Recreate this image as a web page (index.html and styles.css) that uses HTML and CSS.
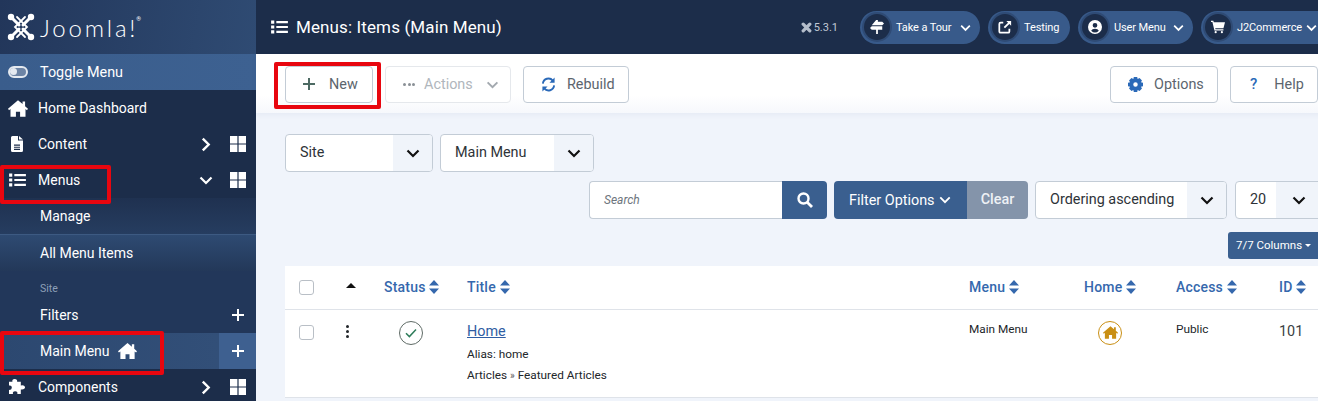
FILE: index.html
```html
<!DOCTYPE html>
<html lang="en">
<head>
    <meta charset="UTF-8">
    <title>Menus: Items (Main Menu)</title>
    <link rel="stylesheet" href="styles.css">
</head>
<body>
<svg class="sprites" width="0" height="0">
    <symbol id="i-home" viewBox="0 0 24 20"><path d="M12 0 L17.5 4.7 V1.5 H20.5 V7.3 L24 10.4 L22.8 12 L21 10.5 V20 H14.5 V14 H9.5 V20 H3 V10.5 L1.2 12 L0 10.4 Z"/></symbol>
    <symbol id="i-grid" viewBox="0 0 16 16"><path d="M0 0H7.4V7.4H0Z M8.6 0H16V7.4H8.6Z M0 8.6H7.4V16H0Z M8.6 8.6H16V16H8.6Z"/></symbol>
    <symbol id="i-list" viewBox="0 0 18 15"><path d="M0 .5H3.4V3.9H0Z M0 5.8H3.4V9.2H0Z M0 11.1H3.4V14.5H0Z M5.6 1H18V3.4H5.6Z M5.6 6.3H18V8.7H5.6Z M5.6 11.6H18V14H5.6Z"/></symbol>
    <symbol id="i-down" viewBox="0 0 14 9"><path d="M1.5 1.5 L7 7 L12.5 1.5" fill="none" stroke="currentColor" stroke-width="2.2"/></symbol>
    <symbol id="i-right" viewBox="0 0 9 14"><path d="M1.5 1.5 L7 7 L1.5 12.5" fill="none" stroke="currentColor" stroke-width="2.2"/></symbol>
    <symbol id="i-plus" viewBox="0 0 12 12"><path d="M6 0V12 M0 6H12" fill="none" stroke="currentColor" stroke-width="2"/></symbol>
    <symbol id="i-sort" viewBox="0 0 10 14"><path d="M5 0 L10 5.6 H0 Z M0 8.4 H10 L5 14 Z"/></symbol>
</svg>

<div class="layout">
    <aside class="sidebar">
        <div class="logo">
            <svg class="logo-mark" viewBox="0 0 28 28">
                <g fill="none" stroke="#fff" stroke-linecap="round">
                    <path d="M5 5 L12 12 M16 16 L23 23 M23 5 L16 12 M12 16 L5 23" stroke-width="3"/>
                    <path d="M10 4 L20 14 L10 24 M18 4 L8 14 L18 24" stroke-width="1.8"/>
                </g>
                <g fill="#fff"><circle cx="4" cy="4" r="3.2"/><circle cx="24" cy="4" r="3.2"/><circle cx="4" cy="24" r="3.2"/><circle cx="24" cy="24" r="3.2"/></g>
            </svg>
            <span class="logo-text">Joomla!</span><sup class="logo-reg">®</sup>
        </div>
        <div class="side-toggle">
            <span class="toggle-icon"><span class="toggle-knob"></span></span>
            <span>Toggle Menu</span>
        </div>
        <div class="side-item">
            <svg class="side-icon"><use href="#i-home"/></svg>
            <span class="side-label">Home Dashboard</span>
        </div>
        <div class="side-item">
            <svg class="side-icon side-icon-doc" viewBox="0 0 12 16"><path d="M0 1.5Q0 0 1.5 0H7V4.5H12V14.5Q12 16 10.5 16H1.5Q0 16 0 14.5Z M8 0L12 3.6H8Z M3 8.6V9.7H9V8.6Z M3 10.7V11.8H9V10.7Z M3 12.8V13.9H9V12.8Z" fill-rule="evenodd"/></svg>
            <span class="side-label">Content</span>
            <svg class="side-chev"><use href="#i-right"/></svg>
            <svg class="side-grid"><use href="#i-grid"/></svg>
        </div>
        <div class="side-item">
            <svg class="side-icon side-icon-list"><use href="#i-list"/></svg>
            <span class="side-label">Menus</span>
            <svg class="side-chev side-chev-down"><use href="#i-down"/></svg>
            <svg class="side-grid"><use href="#i-grid"/></svg>
        </div>
        <div class="submenu">
            <div class="sub-item sub-manage">Manage</div>
            <div class="sub-item sub-all">All Menu Items</div>
            <div class="sub-caption">Site</div>
            <div class="sub-item sub-filters">
                <span class="side-label">Filters</span>
                <svg class="sub-plus"><use href="#i-plus"/></svg>
            </div>
            <div class="sub-item sub-active">
                <span>Main Menu</span>
                <svg class="sub-home"><use href="#i-home"/></svg>
                <span class="sub-add"><svg class="sub-plus"><use href="#i-plus"/></svg></span>
            </div>
        </div>
        <div class="side-item">
            <svg class="side-icon side-icon-puzzle" viewBox="0 0 18 18"><path d="M6 0 Q9 0 8.6 3 H12.5 V7 Q16 6 17 8.5 Q17 11.5 12.5 11 V16 H8.8 Q9.5 13 6.5 13 Q3.5 13 4.2 16 H0 V11.5 Q3 12 3 9 Q3 6.5 0 7 V3 H3.6 Q3 0 6 0Z"/></svg>
            <span class="side-label">Components</span>
            <svg class="side-chev"><use href="#i-right"/></svg>
            <svg class="side-grid"><use href="#i-grid"/></svg>
        </div>
    </aside>

    <main class="main">
        <header class="topbar">
            <svg class="title-icon"><use href="#i-list"/></svg>
            <h1 class="page-title">Menus: Items (Main Menu)</h1>
            <div class="top-right">
                <span class="version">
                    <svg class="version-mark" viewBox="0 0 10 10"><path d="M2 2L8 8M8 2L2 8" stroke="#b4bdca" stroke-width="3" stroke-linecap="round"/></svg>
                    5.3.1
                </span>
                <span class="pill pill-tour">
                    <span class="pill-icon"><svg viewBox="0 0 16 16"><path d="M7 0H9V2H14L16 4 14 6H2ZM0 9L2 7H14V11H9V16H7V11H2Z" fill="#fff"/></svg></span>
                    <span class="pill-text">Take a Tour</span>
                    <svg class="pill-chev"><use href="#i-down"/></svg>
                </span>
                <span class="pill pill-testing">
                    <span class="pill-icon"><svg viewBox="0 0 16 16"><path d="M6 3H3Q1.5 3 1.5 4.5V13Q1.5 14.5 3 14.5H11.5Q13 14.5 13 13V10" fill="none" stroke="#fff" stroke-width="2"/><path d="M9.5 1H15V6.5L13 4.5 8 9.5 6.5 8 11.5 3Z" fill="#fff"/></svg></span>
                    <span class="pill-text">Testing</span>
                </span>
                <span class="pill pill-user">
                    <span class="pill-icon"><svg viewBox="0 0 16 16"><path fill-rule="evenodd" d="M8 0A8 8 0 1 1 8 16 8 8 0 1 1 8 0Z M8 3.4A2.7 2.7 0 1 0 8 8.8 2.7 2.7 0 1 0 8 3.4Z M3.6 12.2Q8 16.6 12.4 12.2 11.4 10 8 10 4.6 10 3.6 12.2Z" fill="#fff"/></svg></span>
                    <span class="pill-text">User Menu</span>
                    <svg class="pill-chev"><use href="#i-down"/></svg>
                </span>
                <span class="pill pill-shop">
                    <span class="pill-icon"><svg viewBox="0 0 18 16"><path d="M0 0H3L3.6 2H18L16 9.5H5.4L5.8 11H16V12.6H4.4L1.8 1.6H0Z" fill="#fff"/><circle cx="6" cy="14.6" r="1.4" fill="#fff"/><circle cx="14" cy="14.6" r="1.4" fill="#fff"/></svg></span>
                    <span class="pill-text">J2Commerce</span>
                    <svg class="pill-chev"><use href="#i-down"/></svg>
                </span>
            </div>
        </header>

        <div class="toolbar">
            <button class="btn btn-new"><svg class="btn-icon btn-icon-new"><use href="#i-plus"/></svg>New</button>
            <button class="btn btn-actions"><span class="dots"><i></i><i></i><i></i></span>Actions<svg class="btn-chev"><use href="#i-down"/></svg></button>
            <button class="btn btn-rebuild">
                <svg class="btn-icon btn-icon-sync" viewBox="0 0 16 16"><path d="M2 7A6 6 0 0 1 12.6 3.8 M14 9A6 6 0 0 1 3.4 12.2" fill="none" stroke="#2a69b8" stroke-width="2"/><path d="M14.5 0.5V6H9ZM1.5 15.5V10H7Z" fill="#2a69b8"/></svg>
                Rebuild
            </button>
            <span class="toolbar-gap"></span>
            <button class="btn btn-options">
                <svg class="btn-icon btn-icon-gear" viewBox="0 0 16 16"><path fill-rule="evenodd" fill="#2a69b8" d="M6.2 0H9.8L10.3 2.2 12.3 1.1 14.9 3.7 13.8 5.7 16 6.2V9.8L13.8 10.3 14.9 12.3 12.3 14.9 10.3 13.8 9.8 16H6.2L5.7 13.8 3.7 14.9 1.1 12.3 2.2 10.3 0 9.8V6.2L2.2 5.7 1.1 3.7 3.7 1.1 5.7 2.2Z M8 5.6A2.4 2.4 0 1 0 8 10.4 2.4 2.4 0 1 0 8 5.6Z"/></svg>
                Options
            </button>
            <button class="btn btn-help"><span class="help-mark">?</span>Help</button>
        </div>

        <div class="content">
            <div class="menu-selects">
                <div class="select select-site"><span class="select-value">Site</span><span class="select-arrow"><svg><use href="#i-down"/></svg></span></div>
                <div class="select select-menu"><span class="select-value">Main Menu</span><span class="select-arrow"><svg><use href="#i-down"/></svg></span></div>
            </div>
            <div class="filter-row">
                <div class="search">
                    <span class="search-input">Search</span>
                    <span class="search-btn"><svg viewBox="0 0 16 16"><circle cx="6.5" cy="6.5" r="5" fill="none" stroke="#fff" stroke-width="2.4"/><path d="M10.2 10.2L15 15" stroke="#fff" stroke-width="2.8"/></svg></span>
                </div>
                <div class="filter-group">
                    <span class="filter-btn">Filter Options<svg><use href="#i-down"/></svg></span>
                    <span class="clear-btn">Clear</span>
                </div>
                <div class="select select-order"><span class="select-value">Ordering ascending</span><span class="select-arrow"><svg><use href="#i-down"/></svg></span></div>
                <div class="select select-limit"><span class="select-value">20</span><span class="select-arrow"><svg><use href="#i-down"/></svg></span></div>
            </div>
            <div class="columns-row">
                <span class="columns-btn">7/7 Columns<span class="caret"></span></span>
            </div>

            <table class="items">
                <colgroup>
                    <col class="col-check"><col class="col-order"><col class="col-status"><col class="col-title">
                    <col class="col-menu"><col class="col-home"><col class="col-access"><col class="col-id">
                </colgroup>
                <thead>
                    <tr>
                        <th><span class="checkbox"></span></th>
                        <th><span class="order-up"></span></th>
                        <th>Status <svg class="sort"><use href="#i-sort"/></svg></th>
                        <th>Title <svg class="sort"><use href="#i-sort"/></svg></th>
                        <th>Menu <svg class="sort"><use href="#i-sort"/></svg></th>
                        <th>Home <svg class="sort"><use href="#i-sort"/></svg></th>
                        <th>Access <svg class="sort"><use href="#i-sort"/></svg></th>
                        <th>ID <svg class="sort"><use href="#i-sort"/></svg></th>
                    </tr>
                </thead>
                <tbody>
                    <tr>
                        <td><span class="checkbox"></span></td>
                        <td><span class="kebab"><i></i><i></i><i></i></span></td>
                        <td class="cell-status"><span class="status-ok"><svg viewBox="0 0 12 10"><path d="M1 5.2L4.4 8.6 11 1.6" fill="none" stroke="#2f7d5b" stroke-width="1.5"/></svg></span></td>
                        <td>
                            <a class="item-link" href="#">Home</a>
                            <div class="item-note">Alias: home</div>
                            <div class="item-note">Articles <span class="crumb">»</span> Featured Articles</div>
                        </td>
                        <td class="cell-small">Main Menu</td>
                        <td class="cell-home"><span class="home-badge"><svg><use href="#i-home"/></svg></span></td>
                        <td class="cell-small">Public</td>
                        <td class="cell-id">101</td>
                    </tr>
                </tbody>
            </table>
        </div>
    </main>
</div>

<!-- red annotation boxes -->
<div class="mark mark-new"></div>
<div class="mark mark-menus"></div>
<div class="mark mark-main"></div>
</body>
</html>
```

FILE: styles.css
```css
/* Page */
html, body {
    margin: 0;
    height: 401px;
    overflow: hidden;
}

body {
    position: relative;
    width: 1318px;
    background-color: #f0f4fb;
    font-family: Roboto, "Liberation Sans", sans-serif;
    font-size: 14px;
    color: #22262a;
}

.sprites {
    display: block;
    height: 0;
}

svg {
    fill: currentColor;
}

.layout {
    display: flex;
    width: 1345px;
}

/* Sidebar */
.sidebar {
    flex: 0 0 256px;
    height: 405px;
    background-color: #1c2d4a;
    color: #fff;
    font-size: 14px;
}

.logo {
    display: flex;
    align-items: center;
    height: 54px;
    padding-left: 7px;
    box-sizing: border-box;
    background: linear-gradient(100deg, #22365a 0%, #2f4b73 100%);
}

.logo-mark {
    width: 28px;
    height: 28px;
    margin-right: 5px;
}

.logo-text {
    font-family: Lato, sans-serif;
    font-weight: 300;
    font-size: 24px;
    letter-spacing: 2.8px;
}

.logo-reg {
    font-size: 6px;
    align-self: flex-start;
    margin: 15px 0 0 -2px;
}

.side-toggle {
    display: flex;
    align-items: center;
    height: 36px;
    padding-left: 8px;
    font-size: 14.4px;
    background: linear-gradient(90deg, #3a5d8c, #3d6191);
}

.toggle-icon {
    display: block;
    box-sizing: border-box;
    width: 20px;
    height: 12px;
    margin-right: 12px;
    border: 2.5px solid #e4e9f0;
    border-radius: 6px;
    background-color: #6d84a5;
}

.toggle-knob {
    display: block;
    width: 7px;
    height: 7px;
    border-radius: 50%;
    background-color: #e4e9f0;
}

.side-item {
    display: flex;
    align-items: center;
    height: 36px;
    padding-left: 8px;
}

.side-icon {
    flex: none;
    width: 20px;
    height: 17px;
    margin-right: 10px;
}

.side-icon-doc {
    width: 12px;
    height: 16px;
    margin: 0 15px 0 3px;
}

.side-icon-list {
    width: 17px;
    height: 14px;
    margin: 0 12px 0 1px;
}

.side-icon-puzzle {
    width: 17px;
    height: 17px;
    margin: 0 12px 0 1px;
}

.side-label {
    flex: 1;
}

.side-chev {
    flex: none;
    width: 10px;
    height: 15px;
    margin-right: 19px;
}

.side-chev-down {
    width: 14px;
    height: 9px;
    margin: 0 17px 0 -3px;
}

.side-grid {
    flex: none;
    width: 16px;
    height: 16px;
    margin-right: 10px;
}

.submenu {
    background-color: #22375a;
}

.sub-item {
    display: flex;
    align-items: center;
    height: 36px;
    padding-left: 40px;
}

.sub-manage {
    background: linear-gradient(180deg, #1f3150, #263d60);
    border-bottom: 1px solid #3d5a82;
}

.sub-all {
    background: linear-gradient(180deg, #2e4a72, #233859);
}

.sub-caption {
    height: 26px;
    padding: 11px 0 0 40px;
    box-sizing: border-box;
    font-size: 10.5px;
    line-height: 14px;
    color: #8ea0b8;
}

.sub-plus {
    display: block;
    width: 12px;
    height: 12px;
    margin-right: 12px;
}

.sub-active {
    background: linear-gradient(90deg, #2c4870, #324f78 85%);
}

.sub-home {
    width: 19px;
    height: 16px;
    margin-left: 8px;
    flex: 1 1 auto;
    max-width: 19px;
}

.sub-add {
    display: flex;
    align-items: center;
    height: 100%;
    margin-left: auto;
    padding-left: 13px;
    background-color: #3e6090;
}

/* Top bar */
.main {
    flex: 1;
    min-width: 0;
}

.topbar {
    display: flex;
    align-items: center;
    height: 54px;
    padding-left: 15px;
    background-color: #1c2d4a;
    color: #fff;
}

.title-icon {
    width: 17px;
    height: 14px;
    margin-right: 8px;
}

.page-title {
    margin: 0;
    font-size: 17px;
    font-weight: 400;
    letter-spacing: 0.12px;
}

.top-right {
    display: flex;
    align-items: center;
    margin-left: auto;
    gap: 8px;
    font-size: 11px;
    white-space: nowrap;
}

.version {
    display: flex;
    align-items: center;
    margin-right: 14px;
    color: #c0c8d4;
}

.version-mark {
    width: 11px;
    height: 11px;
    margin-right: 2px;
}

.pill {
    display: flex;
    align-items: center;
    height: 33px;
    border-radius: 17px;
    background-color: #385a8a;
}

.pill-icon {
    display: flex;
    align-items: center;
    justify-content: center;
    width: 26px;
    height: 26px;
    margin: 0 6px 0 4px;
    border-radius: 50%;
    background-color: #1c2d4a;
    box-shadow: 0 0 0 2px #2f4b75;
}

.pill-icon svg {
    width: 14px;
    height: 14px;
}

.pill-text {
    letter-spacing: -0.1px;
}

.pill-chev {
    width: 11px;
    height: 8px;
    margin: 1px 9px 0 auto;
}

.pill-tour { width: 120px; }
.pill-testing { width: 82px; }
.pill-user { width: 115px; }
.pill-shop { width: 144px; }
.pill-shop .pill-chev { margin-right: 28px; }

/* Toolbar */
.toolbar {
    display: flex;
    align-items: center;
    gap: 12px;
    height: 59px;
    padding: 1px 27px 0 29px;
    box-sizing: border-box;
    background: linear-gradient(180deg, #fff 70%, #f6f8fc 100%);
    box-shadow: 0 2px 5px rgba(30, 60, 110, 0.05);
}

.toolbar-gap {
    flex: 1;
}

.btn {
    display: flex;
    align-items: center;
    height: 37px;
    padding: 0 15px 0 17px;
    box-sizing: border-box;
    border: 1px solid #c3ccd6;
    border-radius: 4px;
    background-color: #fff;
    color: #5c656e;
    font-family: inherit;
    font-size: 14.4px;
}

.btn-icon {
    width: 15px;
    height: 15px;
    margin-right: 11px;
    flex: none;
}

.btn-icon-new {
    width: 12px;
    height: 12px;
    margin-right: 14px;
    color: #4d6a63;
}

.btn-new {
    width: 88px;
}

.btn-actions {
    width: 126px;
    color: #b0b6bc;
    border-color: #e5e8ec;
}

.dots {
    display: flex;
    gap: 1.5px;
    margin-right: 9px;
}

.dots i {
    display: block;
    width: 3px;
    height: 3px;
    border-radius: 50%;
    background-color: #8a9096;
}

.btn-chev {
    width: 13px;
    height: 8px;
    margin: 1px -4px 0 auto;
    color: #a3a9af;
}

.btn-rebuild {
    width: 106px;
}

.btn-options {
    width: 108px;
}

.btn-help {
    width: 88px;
}

.help-mark {
    font-weight: 500;
    font-size: 15px;
    color: #2a69b8;
    margin: 0 17px 0 2px;
}

/* Filters */
.content {
    padding: 21px 0 0 29px;
}

.menu-selects {
    display: flex;
    gap: 7px;
}

.select {
    display: flex;
    height: 38px;
    box-sizing: border-box;
    border: 1px solid #c3ccd6;
    border-radius: 4px;
    background-color: #fff;
    overflow: hidden;
    font-size: 14.4px;
    color: #2e3338;
}

.select-value {
    flex: 1;
    padding-left: 14px;
    line-height: 35px;
}

.select-arrow {
    display: flex;
    align-items: center;
    justify-content: center;
    width: 39px;
    background-color: #f0f4fa;
}

.select-arrow svg {
    width: 14px;
    height: 9px;
    color: #111;
}

.select-site { width: 148px; }
.select-menu { width: 154px; }
.select-order { width: 192px; }

.select-limit {
    width: 96px;
    margin-left: 1px;
}

.select-limit .select-arrow {
    width: 54px;
    justify-content: flex-start;
    padding-left: 16px;
    box-sizing: border-box;
}

.filter-row {
    display: flex;
    margin: 9px 0 0 304px;
    gap: 7px;
}

.search {
    display: flex;
    width: 238px;
    height: 38px;
}

.search-input {
    flex: 1;
    padding-left: 14px;
    line-height: 36px;
    box-sizing: border-box;
    border: 1px solid #c3ccd6;
    border-right: 0;
    border-radius: 4px 0 0 4px;
    background-color: #fff;
    font-size: 12px;
    font-style: italic;
    color: #6d757d;
}

.search-btn {
    display: flex;
    align-items: center;
    justify-content: center;
    width: 45px;
    border-radius: 0 4px 4px 0;
    background-color: #3a5f8f;
}

.search-btn svg {
    width: 16px;
    height: 16px;
}

.filter-group {
    display: flex;
    height: 38px;
    border-radius: 4px;
    overflow: hidden;
    color: #fff;
    font-size: 14.4px;
    line-height: 37px;
}

.filter-btn {
    display: flex;
    align-items: center;
    width: 133px;
    padding-left: 15px;
    box-sizing: border-box;
    background-color: #3a5f8f;
}

.filter-btn svg {
    width: 12px;
    height: 8px;
    margin-left: 4px;
}

.clear-btn {
    width: 61px;
    text-align: center;
    background-color: #8494aa;
    color: #eef1f5;
    font-weight: 500;
}

.columns-row {
    display: flex;
    margin-top: 13px;
    padding-left: 943px;
}

.columns-btn {
    display: flex;
    align-items: center;
    width: 113px;
    height: 27px;
    padding: 0 0 2px 8px;
    box-sizing: border-box;
    border-radius: 3px;
    background-color: #3a5f8f;
    color: #fff;
    font-size: 11.5px;
}

.caret {
    margin: 2px 0 0 3px;
    border-left: 3px solid transparent;
    border-right: 3px solid transparent;
    border-top: 3px solid #fff;
}

/* Table */
.items {
    width: 1056px;
    margin-top: 7px;
    table-layout: fixed;
    border-collapse: collapse;
    background-color: #fff;
}

.col-check { width: 46px; }
.col-order { width: 39px; }
.col-status { width: 83px; }
.col-title { width: 502px; }
.col-menu { width: 115px; }
.col-home { width: 92px; }
.col-access { width: 103px; }
.col-id { width: 76px; }

.items th {
    height: 43px;
    padding: 0 0 0 14px;
    box-sizing: border-box;
    text-align: left;
    font-size: 14px;
    font-weight: 500;
    color: #3568ad;
    border-bottom: 1px solid #dfe3e9;
    letter-spacing: 0.2px;
}

.items td {
    height: 88px;
    padding: 12px 0 0 14px;
    box-sizing: border-box;
    vertical-align: top;
    border-bottom: 1px solid #dfe3e9;
}

.sort {
    display: inline-block;
    width: 10px;
    height: 14px;
    vertical-align: -2px;
    color: #3568ad;
}

.checkbox {
    display: block;
    box-sizing: border-box;
    width: 15px;
    height: 15px;
    border: 1px solid #b9bfc6;
    border-radius: 3px;
    background-color: #fff;
}

.items td .checkbox {
    margin-top: 3px;
}

.order-up {
    display: block;
    width: 0;
    margin: -4px 0 0 1px;
    border-left: 5px solid transparent;
    border-right: 5px solid transparent;
    border-bottom: 5px solid #111;
}

.kebab {
    display: flex;
    flex-direction: column;
    gap: 2px;
    margin: 3px 0 0 1px;
}

.kebab i {
    display: block;
    width: 3px;
    height: 3px;
    border-radius: 50%;
    background-color: #22262a;
}

.status-ok {
    display: flex;
    align-items: center;
    justify-content: center;
    box-sizing: border-box;
    width: 24px;
    height: 24px;
    margin: -1px 0 0 15px;
    border: 1px solid #5f6b66;
    border-radius: 50%;
}

.status-ok svg {
    width: 12px;
    height: 10px;
}

.item-link {
    display: block;
    margin-top: 1px;
    font-size: 14.4px;
    line-height: 18px;
    color: #2f5da3;
}

.item-note {
    margin-top: 3px;
    font-size: 11.8px;
    line-height: 18px;
    color: #22262a;
}

.item-link + .item-note {
    margin-top: 4px;
}

.crumb {
    font-size: 10px;
    color: #555;
}

.cell-small {
    font-size: 11.8px;
    line-height: 14px;
}

.home-badge {
    display: flex;
    align-items: center;
    justify-content: center;
    box-sizing: border-box;
    width: 24px;
    height: 24px;
    margin: -1px 0 0 14px;
    border: 1px solid #c98f14;
    border-radius: 50%;
    color: #c98f14;
}

.home-badge svg {
    width: 15px;
    height: 13px;
}

.items td.cell-id {
    padding-top: 13px;
    font-size: 14.4px;
    line-height: 18px;
    color: #3a3f44;
}

/* Red annotation boxes */
.mark {
    position: absolute;
    box-sizing: border-box;
    border: 4px solid #e8060f;
    border-radius: 2px;
}

.mark-new {
    left: 274px;
    top: 62px;
    width: 107px;
    height: 47px;
}

.mark-menus {
    left: 0;
    top: 165px;
    width: 111px;
    height: 39px;
}

.mark-main {
    left: 0;
    top: 331px;
    width: 164px;
    height: 44px;
}
```
